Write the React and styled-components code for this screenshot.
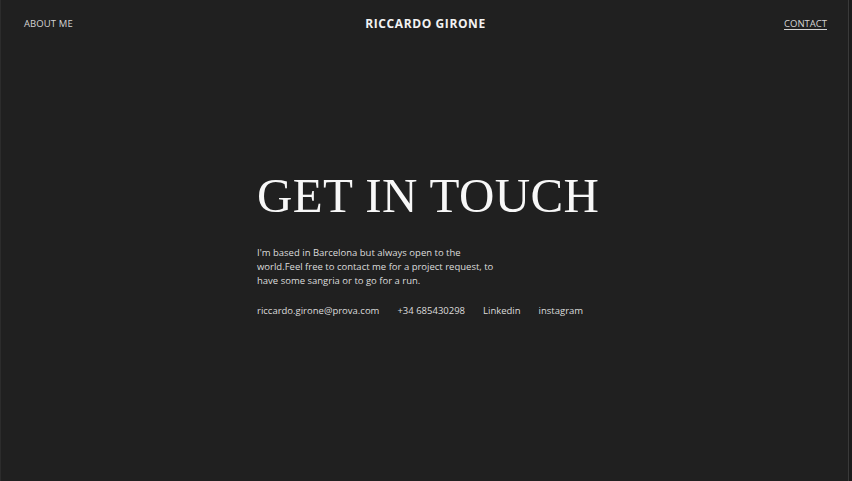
import React from 'react';
import styled, { createGlobalStyle } from 'styled-components';

// Global
const GlobalStyle = createGlobalStyle`
    html, body {
        margin: 0;
        padding: 0;
        background: #202020;
    }
    * { box-sizing: border-box; }
`;

// Styled Components
const Page = styled.div`
    width: 852px;
    height: 481px;
    background: #202020;
    border-left: 1px solid #2c2c2c;
    border-right: 3px solid #1b1b1b;
    box-shadow: inset -1px 0 0 #3a3a3a;
    font-family: "Open Sans", "DejaVu Sans", sans-serif;
    color: #e6e6e6;
    display: flex;
    flex-direction: column;
`;

const Nav = styled.nav`
    display: grid;
    grid-template-columns: 1fr auto 1fr;
    align-items: center;
    padding: 15px 22px 0 23px;
    height: 31px;
`;

const NavLink = styled.a`
    font-size: 9.5px;
    letter-spacing: ${p => (p.underline ? '0' : '0.1px')};
    color: #d4d4d4;
    text-decoration: ${p => (p.underline ? 'underline' : 'none')};
    text-underline-offset: 2px;
    justify-self: ${p => p.align || 'start'};
`;

const Logo = styled.div`
    font-size: 12px;
    font-weight: 700;
    letter-spacing: 0.6px;
    color: #f2f2f2;
`;

const Main = styled.main`
    flex: 1;
    display: flex;
    justify-content: center;
    padding-top: 137px;
`;

const Content = styled.section`
    width: 336px;
    display: flex;
    flex-direction: column;
`;

const Title = styled.h1`
    margin: 0;
    font-family: "Liberation Serif", "DejaVu Serif", serif;
    font-weight: 400;
    font-size: 49px;
    line-height: 56px;
    letter-spacing: 0.4px;
    color: #f7f7f7;
    white-space: nowrap;
`;

const Text = styled.p`
    margin: 22px 0 0;
    width: 240px;
    font-size: 9.5px;
    line-height: 14px;
    color: #dcdcdc;
`;

const Links = styled.div`
    display: flex;
    gap: 18px;
    margin-top: 16px;
`;

const Link = styled.a`
    font-size: 9.5px;
    color: #dcdcdc;
    text-decoration: none;
`;

const contacts = ['riccardo.girone@prova.com', '+34 685430298', 'Linkedin', 'instagram'];

const App = () => (
    <>
        <GlobalStyle />
        <Page>
            <Nav>
                <NavLink>ABOUT ME</NavLink>
                <Logo>RICCARDO GIRONE</Logo>
                <NavLink align="end" underline>CONTACT</NavLink>
            </Nav>
            <Main>
                <Content>
                    <Title>GET IN TOUCH</Title>
                    <Text>
                        I'm based in Barcelona but always open to the world.Feel free to contact me for a project request, to have some sangria or to go for a run.
                    </Text>
                    <Links>
                        {contacts.map(c => <Link key={c}>{c}</Link>)}
                    </Links>
                </Content>
            </Main>
        </Page>
    </>
);

export default App;
